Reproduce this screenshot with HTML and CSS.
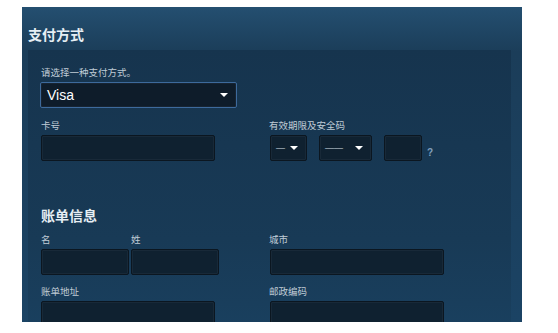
FILE: index.html
```html
<!DOCTYPE html>
<html lang="zh-CN">
  <head>
    <meta charset="UTF-8" />
    <meta name="viewport" content="width=device-width, initial-scale=1.0" />
    <title>支付方式</title>
    <link rel="stylesheet" href="styles.css">
  </head>
  <body>
    <div class="panel">
      <h2 class="panel-title">支付方式</h2>
      <div class="panel-body">
        <div class="field">
          <label class="lbl">请选择一种支付方式。</label>
          <div class="select select-method">
            <span>Visa</span>
            <i class="caret"></i>
          </div>
        </div>

        <div class="row">
          <div class="col">
            <label class="lbl">卡号</label>
            <div class="input w-card"></div>
          </div>
          <div class="col">
            <label class="lbl">有效期限及安全码</label>
            <div class="expiry">
              <div class="select small month"><span>—</span><i class="caret"></i></div>
              <div class="select small year"><span>——</span><i class="caret"></i></div>
              <div class="input cvv"></div>
              <span class="help">?</span>
            </div>
          </div>
        </div>

        <h3 class="section-title">账单信息</h3>

        <div class="row">
          <div class="col names">
            <div>
              <label class="lbl">名</label>
              <div class="input w-name"></div>
            </div>
            <div>
              <label class="lbl">姓</label>
              <div class="input w-name"></div>
            </div>
          </div>
          <div class="col">
            <label class="lbl">城市</label>
            <div class="input w-city"></div>
          </div>
        </div>

        <div class="row">
          <div class="col">
            <label class="lbl">账单地址</label>
            <div class="input w-card"></div>
          </div>
          <div class="col">
            <label class="lbl">邮政编码</label>
            <div class="input w-city"></div>
          </div>
        </div>
      </div>
    </div>
  </body>
</html>
```
FILE: styles.css
```css
body {
  margin: 0;
  background: #ffffff;
  font-family: "Noto Sans CJK SC", "Liberation Sans", sans-serif;
  color: #c6d4df;
  height: 333px;
  overflow: hidden;
}
.panel {
  margin: 7px 0 0 22px;
  width: 500px;
  height: 315px;
  background: linear-gradient(to bottom, #244f70 0px, #1b3d59 45px, #1b4364 100%);
  overflow: hidden;
}
.panel-title {
  margin: 0;
  padding: 17px 0 0 6px;
  height: 26px;
  font-size: 14px;
  font-weight: 700;
  line-height: 20px;
  color: #e6eef4;
}
.panel-body {
  margin-left: 6px;
  width: 456px;
  height: 300px;
  padding: 16px 14px 0 13px;
  background: linear-gradient(to bottom, #16344e 0%, #183a56 60%, #1a4262 100%);
}
.lbl {
  display: block;
  font-size: 9.5px;
  line-height: 12px;
  height: 12px;
  color: #c0ccd6;
  margin-bottom: 4px;
}
.field {
  margin-bottom: 11px;
}
.row {
  display: flex;
  margin-bottom: 10px;
}
.col {
  width: 228px;
}
.names {
  display: flex;
  gap: 2px;
}
.input,
.select {
  box-sizing: border-box;
  height: 26px;
  background: #0f2130;
  border: 1px solid #0b1620;
  border-radius: 2px;
  box-shadow: inset 0 0 0 1px rgba(255, 255, 255, 0.04);
}
.select {
  display: flex;
  align-items: center;
  justify-content: space-between;
  padding: 0 8px 0 6px;
  color: #ffffff;
  font-family: "Liberation Sans", sans-serif;
  font-size: 14px;
}
.select-method {
  width: 197px;
  margin: 1px 0 0 -1px;
  border: 1px solid #3d6a9c;
  background: #0e1c2a;
}
.caret {
  width: 0;
  height: 0;
  border-left: 4px solid transparent;
  border-right: 4px solid transparent;
  border-top: 4px solid #ffffff;
}
.w-card {
  width: 174px;
}
.w-name {
  width: 88px;
}
.w-city {
  width: 174px;
  margin-left: 1px;
}
.expiry {
  display: flex;
  align-items: center;
  margin-left: 1px;
}
.small {
  font-size: 9px;
  color: #d6e0e8;
  padding: 0 8px 0 5px;
}
.month {
  width: 37px;
  margin-right: 12px;
}
.year {
  width: 53px;
  margin-right: 12px;
}
.cvv {
  width: 38px;
}
.help {
  margin: 8px 0 0 5px;
  font-family: "Liberation Sans", sans-serif;
  font-size: 10px;
  font-weight: 700;
  color: #7f9fbc;
}
.section-title {
  margin: 46px 0 10px;
  font-size: 14px;
  font-weight: 700;
  line-height: 16px;
  color: #e6eef4;
}
```
